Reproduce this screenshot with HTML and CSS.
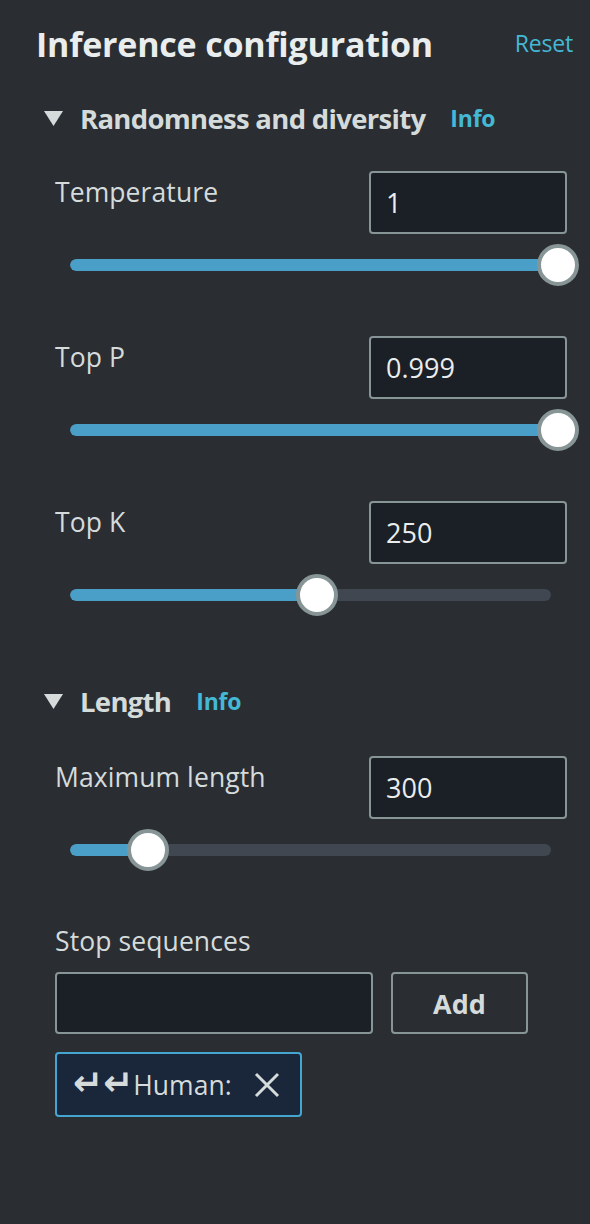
FILE: index.html
```html
<!DOCTYPE html>
<html>
<head>
<meta charset="utf-8">
<link rel="stylesheet" href="styles.css">
</head>
<body>
<div class="panel">
  <div class="title-row">
    <h2 class="title">Inference configuration</h2>
    <a class="reset">Reset</a>
  </div>

  <section class="section">
    <div class="sec-head">
      <svg class="caret" width="19" height="15" viewBox="0 0 19 15"><polygon points="0,0 19,0 9.5,15" fill="#d5dbdb"/></svg>
      <span class="sec-title">Randomness and diversity</span>
      <a class="info">Info</a>
    </div>
    <div class="fields">
      <div class="field">
        <div class="field-row">
          <span class="label">Temperature</span>
          <div class="input">1</div>
        </div>
        <div class="slider"><div class="track"><div class="fill" style="width:100%"></div></div><div class="thumb" style="left:488px"></div></div>
      </div>
      <div class="field">
        <div class="field-row">
          <span class="label">Top P</span>
          <div class="input">0.999</div>
        </div>
        <div class="slider"><div class="track"><div class="fill" style="width:100%"></div></div><div class="thumb" style="left:488px"></div></div>
      </div>
      <div class="field">
        <div class="field-row">
          <span class="label">Top K</span>
          <div class="input">250</div>
        </div>
        <div class="slider"><div class="track"><div class="fill" style="width:247px"></div></div><div class="thumb" style="left:247px"></div></div>
      </div>
    </div>
  </section>

  <section class="section section-length">
    <div class="sec-head">
      <svg class="caret" width="19" height="15" viewBox="0 0 19 15"><polygon points="0,0 19,0 9.5,15" fill="#d5dbdb"/></svg>
      <span class="sec-title">Length</span>
      <a class="info">Info</a>
    </div>
    <div class="fields">
      <div class="field">
        <div class="field-row">
          <span class="label">Maximum length</span>
          <div class="input">300</div>
        </div>
        <div class="slider"><div class="track"><div class="fill" style="width:78px"></div></div><div class="thumb" style="left:78px"></div></div>
      </div>
      <div class="stop">
        <span class="label">Stop sequences</span>
        <div class="stop-row">
          <div class="input input-wide"></div>
          <button class="btn">Add</button>
        </div>
        <div class="token">
          <span class="token-text"><span class="ret">↵↵</span>Human:</span>
          <svg class="dismiss" width="26" height="26" viewBox="0 0 26 26"><path d="M2 2 L24 24 M24 2 L2 24" stroke="#d5dbdb" stroke-width="3" fill="none"/></svg>
        </div>
      </div>
    </div>
  </section>
</div>
</body>
</html>
```

FILE: styles.css
```css
* { box-sizing: border-box; }
html, body {
  margin: 0;
  padding: 0;
  background: #2a2e33;
}
body {
  font-family: "Open Sans", "Noto Sans", sans-serif;
  color: #d5dbdb;
  width: 590px;
  height: 1224px;
}
.panel {
  padding: 22px 17px 0 36px;
}
.title-row {
  display: flex;
  justify-content: space-between;
  align-items: center;
}
.title {
  margin: 0;
  font-size: 34px;
  line-height: 44px;
  font-weight: 700;
  color: #eaeded;
  letter-spacing: -0.2px;
}
.reset {
  font-size: 23px;
  line-height: 32px;
  color: #44b9d6;
  letter-spacing: -0.2px;
  margin-bottom: 2px;
}
.section {
  padding-left: 8px;
  margin-top: 34px;
}
.section-length {
  margin-top: 67px;
}
.sec-head {
  display: flex;
  align-items: center;
  height: 36px;
}
.caret {
  margin-right: 17px;
}
.sec-title {
  font-size: 27.5px;
  font-weight: 700;
  color: #d5dbdb;
  letter-spacing: -0.7px;
  margin-right: 25px;
}
.info {
  font-size: 23px;
  font-weight: 700;
  color: #44b9d6;
  letter-spacing: -0.2px;
}
.fields {
  padding-left: 11px;
  margin-right: 6px;
}
.field {
  margin-top: 35px;
}
.section-length .field {
  margin-top: 37px;
}
.field + .field {
  margin-top: 50px;
}
.field-row {
  display: flex;
  justify-content: space-between;
  align-items: flex-start;
}
.label {
  font-size: 26.5px;
  line-height: 32px;
  padding-top: 5px;
  letter-spacing: 0.1px;
  color: #d5dbdb;
}
.input {
  width: 198px;
  height: 63px;
  border: 2px solid #879596;
  border-radius: 4px;
  background: #1b1f26;
  color: #eaeded;
  font-size: 27px;
  line-height: 59px;
  padding-left: 15px;
}
.slider {
  position: relative;
  margin-left: 15px;
  width: 488px;
  height: 42px;
  margin-top: 10px;
}
.track {
  position: absolute;
  left: 0;
  top: 15px;
  width: 481px;
  height: 12px;
  border-radius: 6px;
  background: #414750;
  overflow: hidden;
}
.fill {
  height: 100%;
  background: #4a9fc8;
  border-radius: 6px 0 0 6px;
}
.thumb {
  position: absolute;
  top: 0;
  width: 42px;
  height: 42px;
  margin-left: -21px;
  border-radius: 50%;
  background: #ffffff;
  border: 4px solid #879596;
}
.stop {
  margin-top: 54px;
}
.stop .label {
  display: block;
  padding-top: 0;
}
.stop-row {
  display: flex;
  gap: 18px;
  margin-top: 15px;
}
.input-wide {
  width: 318px;
  height: 62px;
}
.btn {
  width: 137px;
  height: 62px;
  border: 2px solid #879596;
  border-radius: 4px;
  background: transparent;
  color: #d5dbdb;
  font-family: "Open Sans", "Noto Sans", sans-serif;
  font-size: 27px;
  font-weight: 700;
  letter-spacing: 0;
}
.token {
  margin-top: 18px;
  width: 247px;
  height: 65px;
  border: 2px solid #44a6d0;
  border-radius: 4px;
  background: #1a2639;
  display: flex;
  align-items: center;
  padding-left: 16px;
}
.token-text {
  font-size: 26.5px;
  line-height: 32px;
  color: #d5dbdb;
  display: flex;
  align-items: center;
}
.ret {
  font-family: "DejaVu Sans", sans-serif;
  font-weight: 700;
  font-size: 36px;
  line-height: 32px;
  letter-spacing: 0;
  margin-top: -4px;
}
.dismiss {
  margin-left: 22px;
}
```
